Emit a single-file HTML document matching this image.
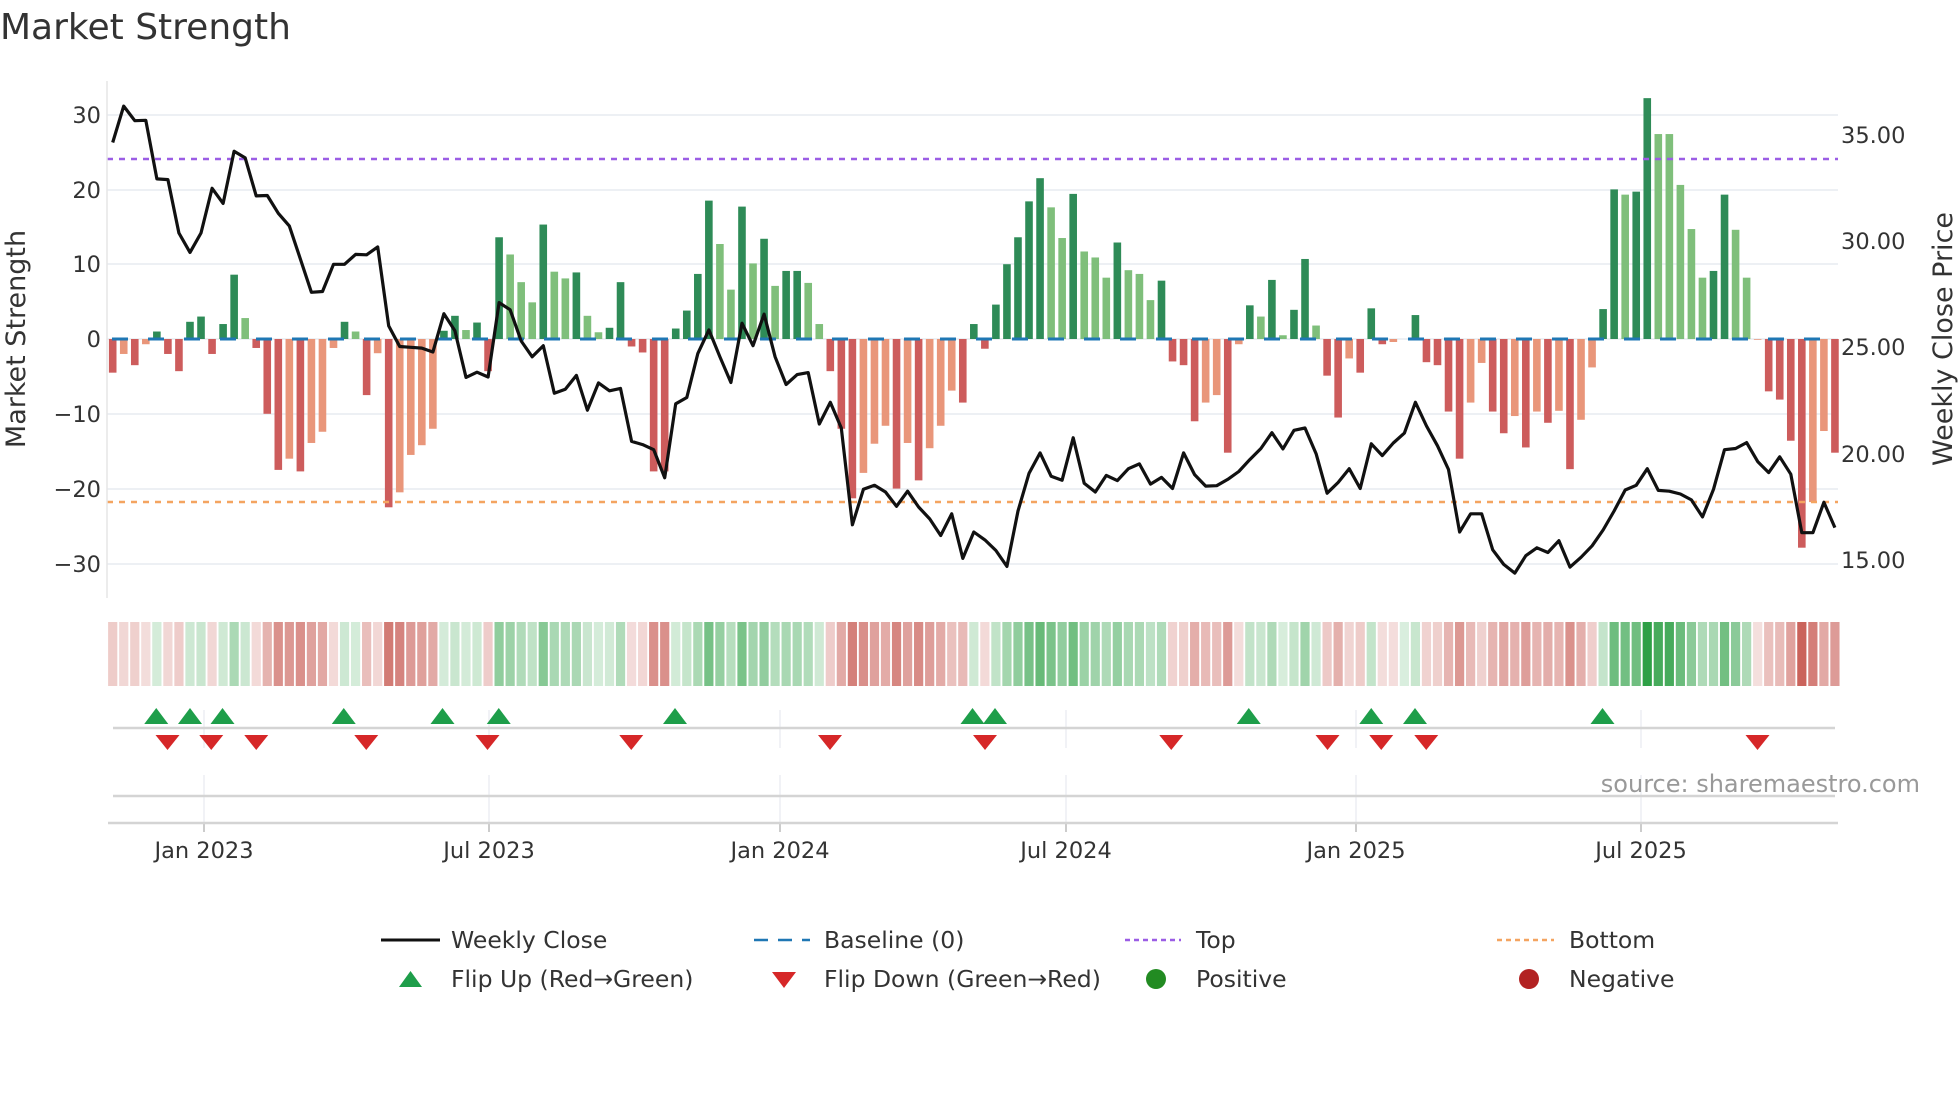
<!DOCTYPE html>
<html><head><meta charset="utf-8">
<style>
html,body{margin:0;padding:0;background:#fff;}
svg{display:block;font-family:"DejaVu Sans","Liberation Sans",sans-serif;}
</style></head>
<body>
<svg id="c" width="1960" height="1102" viewBox="0 0 1960 1102" xmlns="http://www.w3.org/2000/svg">
<rect width="1960" height="1102" fill="#fff"/>
<text x="0" y="39" font-size="36" fill="#333">Market Strength</text>
<g id="grid"></g>
<g id="bars"></g>
<g id="base"></g>
<line x1="107" y1="159" x2="1838" y2="159" stroke="#9b5de5" stroke-width="2.5" stroke-dasharray="6,6"/>
<line x1="107" y1="502" x2="1838" y2="502" stroke="#f4a460" stroke-width="2.5" stroke-dasharray="6,6"/>
<polyline id="price" fill="none" stroke="#111" stroke-width="3.2" stroke-linejoin="round"/>
<line x1="107" y1="81" x2="107" y2="598" stroke="#e6e6e6" stroke-width="1.5"/>
<g font-size="22.5" fill="#333" text-anchor="end">
<text x="101" y="123">30</text><text x="101" y="198">20</text><text x="101" y="272">10</text>
<text x="101" y="347">0</text><text x="101" y="422">−10</text><text x="101" y="497">−20</text><text x="101" y="572">−30</text>
</g>
<g font-size="22.5" fill="#333">
<text x="1841" y="143">35.00</text><text x="1841" y="249">30.00</text><text x="1841" y="355">25.00</text>
<text x="1841" y="462">20.00</text><text x="1841" y="568">15.00</text>
</g>
<text transform="translate(25,339) rotate(-90)" font-size="27" fill="#333" text-anchor="middle">Market Strength</text>
<text transform="translate(1952,339) rotate(-90)" font-size="27" fill="#333" text-anchor="middle">Weekly Close Price</text>
<g id="strip"></g>
<g id="lower"></g>
<g id="flips"></g>
<text x="1920" y="792" font-size="24" fill="#999" text-anchor="end">source: sharemaestro.com</text>
<g font-size="22.5" fill="#333" text-anchor="middle">
<text x="204" y="858">Jan 2023</text><text x="489" y="858">Jul 2023</text><text x="780" y="858">Jan 2024</text>
<text x="1066" y="858">Jul 2024</text><text x="1356" y="858">Jan 2025</text><text x="1641" y="858">Jul 2025</text>
</g>
<g font-size="23.5" fill="#333">
<line x1="381" y1="940" x2="440" y2="940" stroke="#111" stroke-width="3"/>
<text x="451" y="948">Weekly Close</text>
<line x1="754" y1="940" x2="810" y2="940" stroke="#1f77b4" stroke-width="2.5" stroke-dasharray="14,10"/>
<text x="824" y="948">Baseline (0)</text>
<line x1="1125" y1="940" x2="1181" y2="940" stroke="#9b5de5" stroke-width="2.5" stroke-dasharray="5,4"/>
<text x="1196" y="948">Top</text>
<line x1="1497" y1="940" x2="1554" y2="940" stroke="#f4a460" stroke-width="2.5" stroke-dasharray="5,4"/>
<text x="1569" y="948">Bottom</text>
<polygon points="399,987 422,987 410.5,971" fill="#1e9e4a"/>
<text x="451" y="987">Flip Up (Red→Green)</text>
<polygon points="772,972 796,972 784,988" fill="#d62728"/>
<text x="824" y="987">Flip Down (Green→Red)</text>
<circle cx="1156" cy="979" r="10" fill="#228b22"/>
<text x="1196" y="987">Positive</text>
<circle cx="1529" cy="979" r="10" fill="#b22222"/>
<text x="1569" y="987">Negative</text>
</g>
</svg>
<script>
(function(){
var NS="http://www.w3.org/2000/svg";
function el(p,t,a){var e=document.createElementNS(NS,t);for(var k in a)e.setAttribute(k,a[k]);document.getElementById(p).appendChild(e);return e;}
var V=[
[-4.5,'R'],[-2,'L'],[-3.5,'R'],[-0.7,'L'],[1,'D'],[-2,'R'],[-4.3,'R'],[2.3,'D'],[3,'D'],[-2,'R'],
[2,'D'],[8.6,'D'],[2.8,'L'],[-1.2,'R'],[-10,'R'],[-17.5,'R'],[-16,'L'],[-17.7,'R'],[-13.9,'L'],[-12.4,'L'],
[-1.2,'L'],[2.3,'D'],[1,'L'],[-7.5,'R'],[-1.9,'L'],[-22.5,'R'],[-20.5,'L'],[-15.5,'L'],[-14.2,'L'],[-12,'L'],
[1.1,'D'],[3.1,'D'],[1.2,'L'],[2.2,'D'],[-4.3,'R'],[13.6,'D'],[11.3,'L'],[7.6,'L'],[4.9,'L'],[15.3,'D'],
[9,'L'],[8.1,'L'],[8.9,'D'],[3.1,'L'],[0.9,'L'],[1.5,'D'],[7.6,'D'],[-1,'R'],[-1.8,'R'],[-17.7,'R'],
[-17.7,'R'],[1.4,'D'],[3.8,'D'],[8.7,'D'],[18.5,'D'],[12.7,'L'],[6.6,'L'],[17.7,'D'],[10.1,'L'],[13.4,'D'],
[7.1,'L'],[9.1,'D'],[9.1,'D'],[7.5,'L'],[2,'L'],[-4.3,'R'],[-12,'R'],[-21.3,'R'],[-17.9,'L'],[-14,'L'],
[-11.6,'L'],[-20,'R'],[-13.9,'L'],[-18.9,'R'],[-14.6,'L'],[-11.6,'L'],[-6.9,'L'],[-8.5,'R'],[2,'D'],[-1.3,'R'],
[4.6,'D'],[10,'D'],[13.6,'D'],[18.4,'D'],[21.5,'D'],[17.6,'L'],[13.5,'L'],[19.4,'D'],[11.7,'L'],[10.9,'L'],
[8.2,'L'],[12.9,'D'],[9.2,'L'],[8.7,'L'],[5.2,'L'],[7.8,'D'],[-3,'R'],[-3.5,'R'],[-11,'R'],[-8.5,'L'],
[-7.5,'L'],[-15.2,'R'],[-0.7,'L'],[4.5,'D'],[3,'L'],[7.9,'D'],[0.5,'L'],[3.9,'D'],[10.7,'D'],[1.8,'L'],
[-4.9,'R'],[-10.5,'R'],[-2.6,'L'],[-4.5,'R'],[4.1,'D'],[-0.7,'R'],[-0.4,'L'],[0,'L'],[3.2,'D'],[-3.1,'R'],
[-3.5,'R'],[-9.7,'R'],[-16,'R'],[-8.5,'L'],[-3.2,'L'],[-9.7,'R'],[-12.6,'R'],[-10.3,'L'],[-14.5,'R'],[-9.7,'L'],
[-11.2,'R'],[-9.6,'L'],[-17.4,'R'],[-10.8,'L'],[-3.8,'L'],[4,'D'],[20,'D'],[19.3,'L'],[19.7,'D'],[32.2,'D'],
[27.4,'L'],[27.4,'L'],[20.6,'L'],[14.7,'L'],[8.2,'L'],[9.1,'D'],[19.3,'D'],[14.6,'L'],[8.2,'L'],[-0.1,'L'],
[-7,'R'],[-8.1,'R'],[-13.6,'R'],[-27.9,'R'],[-21.8,'L'],[-12.3,'L'],[-15.2,'R']];
var P1=[158,66,103,102,250,252,387,436,387,274,312,180,197,293,292,337,369,453,537,535,466,466,441,442,422,622,674,676,678,688,591,634,752,739,751,563,581,660,700,672,792,782,747,835,766,786,780,914,922,935,1006,819,803,692];
var P2=[632,700,765,615,672,592,700,770,745,740,870,815,880,1125,1035,1025,1042,1078,1040,1080,1110,1152,1097,1210,1143,1163,1190,1230,1090,995,943,1002,1012,905,1020,1042,1000,1013,983,971,1022,1005,1033,943,998,1027,1026,1010,990,960,932,892,933,886];
var P3=[880,945,1045,1018,983,1033,920,950,918,893,815,875,925,985,1143,1097,1097,1188,1225,1247,1203,1183,1195,1165,1232,1207,1178,1138,1090,1037,1025,983,1038,1040,1047,1062,1105,1035,935,932,917,965,993,953,997,1145,1145,1068,1132];
var P=P1.concat(P2,P3);
var C={D:'#2e8b57',L:'#7fbf7b',R:'#cd5c5c',S:'#e9967a'};
function X(i){return 112.7+11.04*i;}
[115,190,264,339,414,489,564].forEach(function(y){el('grid','line',{x1:107,x2:1838,y1:y,y2:y,stroke:'#edf0f4','stroke-width':2});});
for(var i=0;i<V.length;i++){
 var v=V[i][0],t=V[i][1];
 var col=v>=0?(t=='D'?C.D:C.L):(t=='R'?C.R:C.S);
 var y0=339,y1=339-v*7.48;
 if(Math.abs(v)>0.05) el('bars','rect',{x:X(i)-3.8,width:7.6,y:Math.min(y0,y1),height:Math.abs(y1-y0),fill:col});
 var a=0.18+0.82*Math.min(1,Math.abs(v)/32);
 var sc=v>=0?'rgba(46,160,70,'+a+')':'rgba(196,80,72,'+a+')';
 el('strip','rect',{x:X(i)-4.6,width:9.2,y:622,height:64,fill:sc});
}
for(var x=107;x<1820;x+=36){el('base','line',{x1:x+5,x2:x+21,y1:339,y2:339,stroke:'#1f77b4','stroke-width':3});}
var pts=[];for(var j=0;j<P.length;j++){pts.push(X(j).toFixed(1)+','+(80+P[j]/2.529).toFixed(1));}
document.getElementById('price').setAttribute('points',pts.join(' '));
[204,489,780,1066,1356,1641].forEach(function(x){
 el('lower','line',{x1:x,x2:x,y1:710,y2:748,stroke:'#eceef2','stroke-width':1.5});
 el('lower','line',{x1:x,x2:x,y1:775,y2:822,stroke:'#eceef2','stroke-width':1.5});
 el('lower','line',{x1:x,x2:x,y1:822,y2:832,stroke:'#bbb','stroke-width':1.5});
});
el('lower','line',{x1:113,x2:1835,y1:728,y2:728,stroke:'#d4d4d4','stroke-width':2.5});
el('lower','line',{x1:113,x2:1835,y1:796,y2:796,stroke:'#d4d4d4','stroke-width':2.5});
el('lower','line',{x1:108,x2:1838,y1:823,y2:823,stroke:'#d4d4d4','stroke-width':2.5});
[125,152,178,275,354,399,540,778,796,999,1097,1132,1282].forEach(function(d){var x=d*1.25;
 el('flips','polygon',{points:(x-12)+',724 '+(x+12)+',724 '+x+',708',fill:'#1e9e4a'});});
[134,169,205,293,390,505,664,788,937,1062,1105,1141,1406].forEach(function(d){var x=d*1.25;
 el('flips','polygon',{points:(x-12)+',735 '+(x+12)+',735 '+x+',750',fill:'#d62728'});});
})();
</script>
</body></html>
